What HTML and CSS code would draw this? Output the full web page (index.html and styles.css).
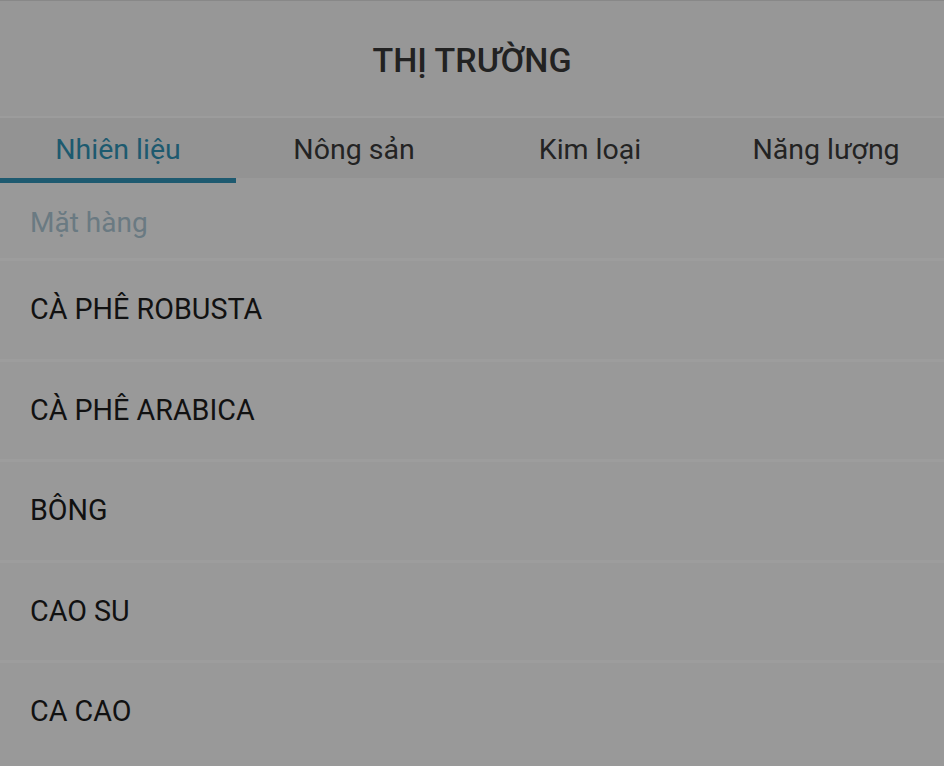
FILE: index.html
```html
<!DOCTYPE html>
<html lang="vi">
<head>
<meta charset="utf-8">
<title>Thị trường</title>
<link rel="stylesheet" href="styles.css">
</head>
<body>
<div class="screen">
  <header class="topbar">
    <h1 class="title">THỊ TRƯỜNG</h1>
  </header>
  <nav class="tabs">
    <div class="tab active">Nhiên liệu</div>
    <div class="tab">Nông sản</div>
    <div class="tab">Kim loại</div>
    <div class="tab">Năng lượng</div>
  </nav>
  <div class="section-head">Mặt hàng</div>
  <ul class="list">
    <li class="row">CÀ PHÊ ROBUSTA</li>
    <li class="row">CÀ PHÊ ARABICA</li>
    <li class="row">BÔNG</li>
    <li class="row">CAO SU</li>
    <li class="row">CA CAO</li>
  </ul>
</div>
</body>
</html>
```

FILE: styles.css
```css
* { box-sizing: border-box; }
html, body {
  margin: 0;
  padding: 0;
  width: 944px;
  height: 766px;
  overflow: hidden;
  background: #999999;
  font-family: Roboto, "Noto Sans", "Liberation Sans", sans-serif;
}
.screen {
  width: 944px;
  height: 766px;
  display: flex;
  flex-direction: column;
  background: #999999;
}
.topbar {
  height: 118px;
  flex: none;
  background: #979797;
  border-top: 1px solid #888888;
  border-bottom: 2px solid #9c9c9c;
  display: flex;
  align-items: center;
  justify-content: center;
}
.title {
  margin: 0;
  font-size: 34px;
  font-weight: 500;
  color: #222222;
  padding-top: 2px;
}
.tabs {
  flex: none;
  height: 60px;
  background: #939393;
  display: grid;
  grid-template-columns: repeat(4, 1fr);
}
.tab {
  position: relative;
  display: flex;
  align-items: center;
  justify-content: center;
  font-size: 28.5px;
  color: #232323;
  padding-top: 3px;
}
.tab.active {
  color: #1d5a6f;
}
.tab.active::after {
  content: "";
  position: absolute;
  left: 0;
  right: 0;
  bottom: -5px;
  height: 5px;
  background: #1e5a70;
}
.section-head {
  flex: none;
  height: 80px;
  padding: 28px 30px 0;
  font-size: 28px;
  color: #6a7a82;
  background: #999999;
}
.list {
  list-style: none;
  margin: 0;
  padding: 0;
}
.row {
  height: 100.5px;
  border-top: 3px solid #9d9d9d;
  padding-left: 30px;
  padding-bottom: 1px;
  display: flex;
  align-items: center;
  font-size: 28.7px;
  color: #111111;
  background: #999999;
}
```
